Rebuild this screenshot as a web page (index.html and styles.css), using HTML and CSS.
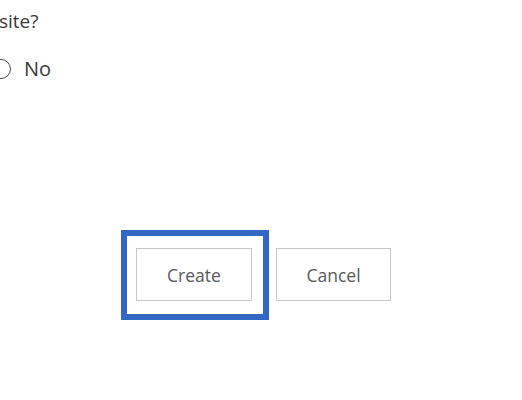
FILE: index.html
```html
<!DOCTYPE html>
<html>
<head>
<meta charset="utf-8">
<link rel="stylesheet" href="styles.css">
</head>
<body>
<div class="page">
  <div class="question">site?</div>
  <label class="option">
    <span class="radio"></span>
    <span class="option-label">No</span>
  </label>
  <div class="actions">
    <div class="highlight">
      <button class="btn">Create</button>
    </div>
    <button class="btn btn-cancel">Cancel</button>
  </div>
</div>
</body>
</html>
```

FILE: styles.css
```css
html, body {
  margin: 0;
  padding: 0;
  background: #ffffff;
}
.page {
  width: 522px;
  height: 400px;
  overflow: hidden;
  font-family: "Open Sans", "Noto Sans", "Liberation Sans", sans-serif;
  color: #3a3a3a;
}
.question {
  font-size: 19px;
  line-height: 24px;
  padding-top: 9px;
  margin-left: -1px;
}
.option {
  display: flex;
  align-items: center;
  margin-top: 24px;
  height: 24px;
}
.radio {
  width: 18px;
  height: 18px;
  border: 1.5px solid #4a4a4a;
  border-radius: 50%;
  margin-left: -9px;
  flex: none;
}
.option-label {
  font-size: 20px;
  margin-left: 13px;
  line-height: 24px;
}
.actions {
  display: flex;
  align-items: flex-start;
  margin-top: 149px;
  padding-left: 121px;
}
.highlight {
  border: 6px solid #3268c3;
  padding: 12px 11px 13px 9px;
  display: flex;
}
.btn {
  width: 116px;
  height: 53px;
  background: #ffffff;
  border: 1px solid #c6c6c6;
  font-family: "Open Sans", "Noto Sans", "Liberation Sans", sans-serif;
  font-size: 17.5px;
  color: #595959;
  padding: 0;
  margin: 0;
}
.btn-cancel {
  margin-left: 7px;
  margin-top: 18px;
  width: 115px;
}
```
